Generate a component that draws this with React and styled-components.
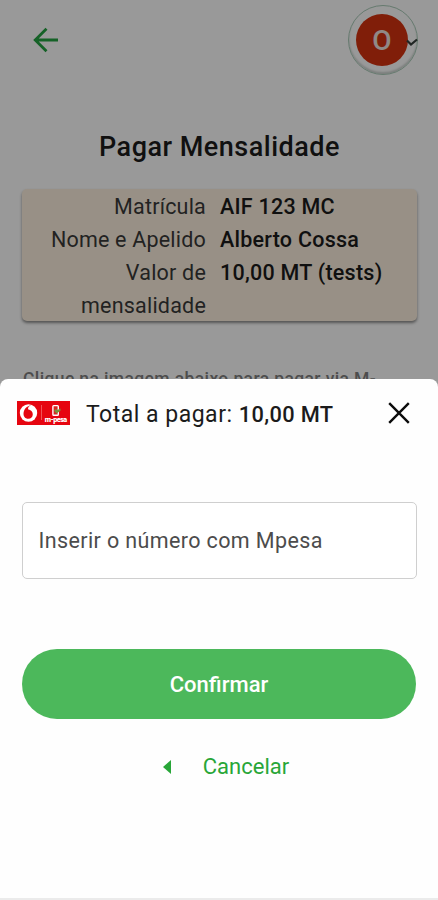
import { useState } from "react";
import styled, { createGlobalStyle } from "styled-components";

const GlobalStyle = createGlobalStyle`
  * {
    box-sizing: border-box;
  }

  body {
    margin: 0;
    background: #fff;
    font-family: Roboto, sans-serif;
    color: #1b1b1b;
  }

  button,
  input {
    font-family: inherit;
    border: 0;
    padding: 0;
    background: none;
  }
`;

const Screen = styled.div`
  position: relative;
  height: 900px;
  overflow: hidden;
  background: #fff;
`;

const TopBar = styled.header`
  display: flex;
  align-items: center;
  justify-content: space-between;
  height: 80px;
  padding: 0 20px 0 33px;
`;

const BackButton = styled.button`
  display: flex;
`;

const Account = styled.div`
  position: relative;
  display: flex;
  align-items: center;
  justify-content: center;
  width: 70px;
  height: 70px;
  padding-right: 2px;
  border: 1px solid #a9cbb8;
  border-radius: 50%;
  box-shadow: inset 0 -2px 2px #cfd4d1;
`;

const Avatar = styled.span`
  display: flex;
  align-items: center;
  justify-content: center;
  width: 52px;
  height: 52px;
  border-radius: 50%;
  background: #d63310;
  color: #f0e4e0;
  font-size: 28px;
  font-weight: 500;
`;

// Small arrow that sits over the avatar ring
const AccountArrow = styled.svg`
  position: absolute;
  right: -1px;
  top: 32px;
`;

const Content = styled.main`
  padding: 0 21px 0 22px;
`;

const Title = styled.h1`
  margin: 47px 0 22px;
  text-align: center;
  font-size: 27px;
  line-height: 40px;
  font-weight: 500;
  letter-spacing: 0.5px;
`;

const Card = styled.dl`
  display: grid;
  grid-template-columns: 184px 1fr;
  grid-auto-rows: min-content;
  column-gap: 14px;
  height: 132px;
  margin: 0;
  padding-top: 1px;
  border-radius: 5px;
  background: #fef1df;
  box-shadow: 0 2px 3px rgba(0, 0, 0, 0.45);
  font-size: 21.5px;
  line-height: 33px;
`;

const Label = styled.dt`
  text-align: right;
  letter-spacing: 0.2px;
  color: #3a3a3a;
`;

const Value = styled.dd`
  margin: 0;
  font-weight: 500;
  letter-spacing: 0.25px;
`;

const Hint = styled.p`
  margin: 45px 0 0 1px;
  font-size: 17.5px;
  line-height: 27px;
  font-weight: 500;
  letter-spacing: 0.38px;
  white-space: nowrap;
  color: #808080;
`;

const Backdrop = styled.div`
  position: absolute;
  inset: 0;
  background: rgba(0, 0, 0, 0.4);
`;

const Sheet = styled.section`
  position: absolute;
  inset: 379px 0 0;
  display: flex;
  flex-direction: column;
  border-bottom: 2px solid #ebebeb;
  border-radius: 8px 8px 0 0;
  background: #fefefe;
`;

const SheetHeader = styled.div`
  display: flex;
  align-items: center;
  height: 68px;
  padding: 0 27px 0 17px;
`;

const Total = styled.p`
  flex: 1;
  margin: 2px 0 0 16px;
  font-size: 23px;
  letter-spacing: 0.5px;
  white-space: nowrap;
`;

const Strong = styled.strong`
  font-size: 21.8px;
  font-weight: 500;
  letter-spacing: 0.35px;
`;

const CloseButton = styled.button`
  display: flex;
`;

const Form = styled.form`
  display: flex;
  flex-direction: column;
  align-items: center;
  padding: 55px 22px 0;
`;

const PhoneInput = styled.input`
  width: 395px;
  height: 77px;
  padding: 0 16px;
  border: 1px solid #cfcfcf;
  border-radius: 5px;
  background: #fff;
  font-size: 21.5px;
  letter-spacing: 0.38px;

  &::placeholder {
    color: #4c4c4c;
  }
`;

const ConfirmButton = styled.button`
  width: 394px;
  height: 70px;
  margin-top: 70px;
  border-radius: 35px;
  background: #4cb85b;
  color: #fff;
  font-size: 22px;
  font-weight: 500;
`;

const CancelButton = styled.button`
  display: flex;
  align-items: center;
  gap: 32px;
  margin-top: 35px;
  padding-left: 13px;
  color: #28a638;
  font-size: 22px;
  line-height: 26px;
`;

const details = [
  { label: "Matrícula", value: "AIF 123 MC" },
  { label: "Nome e Apelido", value: "Alberto Cossa" },
  { label: "Valor de mensalidade", value: "10,00 MT (tests)" },
];

const MpesaLogo = () => (
  <svg width="53" height="24" viewBox="0 0 53 24">
    <rect width="53" height="24" fill="#e60510" />
    <circle cx="11.5" cy="12" r="8.7" fill="#fff" />
    <path
      d="M14.7 4.2c-2.4.3-3.8 2-3.7 4 2.9.6 4.8 2.5 4.8 5.1a4.6 4.6 0 0 1-4.6 4.4c-3 0-4.7-2.3-4.7-5C6.6 8.5 9.6 4.6 14.7 4.2z"
      fill="#e60510"
    />
    <path d="M24.5 4v15" stroke="#f2666b" strokeWidth="0.8" />
    <rect x="35.9" y="4.6" width="5.4" height="9.6" rx="0.8" fill="#d82722" stroke="#fff" strokeWidth="1.4" />
    <path d="M37 9.8l2-1.8 1.3 1 3.2-1.6v2.4l-3.9 2.8z" fill="#78943a" />
    <text x="27.7" y="20.8" fill="#fff" fontFamily="Roboto, sans-serif" fontSize="7.3" fontWeight="900" textLength="22.5">
      m-pesa
    </text>
  </svg>
);

const App = () => {
  const [phone, setPhone] = useState("");

  return (
    <Screen>
      <GlobalStyle />
      <TopBar>
        <BackButton aria-label="Voltar">
          <svg width="26" height="26" viewBox="0 0 26 26" fill="none" stroke="#24a342" strokeWidth="2.8">
            <path d="M25 13H2.5M13.5 1.7L2.2 13l11.3 11.3" />
          </svg>
        </BackButton>
        <Account>
          <Avatar>O</Avatar>
          <AccountArrow width="12" height="9" viewBox="0 0 12 9" fill="none" stroke="#38403c" strokeWidth="2.2">
            <path d="M1 2.5l4 4 6-5" />
          </AccountArrow>
        </Account>
      </TopBar>

      <Content>
        <Title>Pagar Mensalidade</Title>
        <Card>
          {details.map((el) => [
            <Label key={"label-" + el.label}>{el.label}</Label>,
            <Value key={"value-" + el.label}>{el.value}</Value>,
          ])}
        </Card>
        <Hint>Clique na imagem abaixo para pagar via M-</Hint>
      </Content>

      <Backdrop />

      <Sheet>
        <SheetHeader>
          <MpesaLogo />
          <Total>
            Total a pagar: <Strong>10,00 MT</Strong>
          </Total>
          <CloseButton aria-label="Fechar">
            <svg width="24" height="24" viewBox="0 0 24 24" fill="none" stroke="#0b0b0b" strokeWidth="2.4">
              <path d="M2.2 2.2l19.6 19.6M21.8 2.2L2.2 21.8" />
            </svg>
          </CloseButton>
        </SheetHeader>

        <Form onSubmit={(e) => e.preventDefault()}>
          <PhoneInput
            placeholder="Inserir o número com Mpesa"
            value={phone}
            onChange={(e) => setPhone(e.target.value)}
          />
          <ConfirmButton type="submit">Confirmar</ConfirmButton>
          <CancelButton type="button">
            <svg width="9" height="14" viewBox="0 0 9 14" fill="#28a638">
              <path d="M9 0v14L1 7z" />
            </svg>
            Cancelar
          </CancelButton>
        </Form>
      </Sheet>
    </Screen>
  );
};

export default App;
